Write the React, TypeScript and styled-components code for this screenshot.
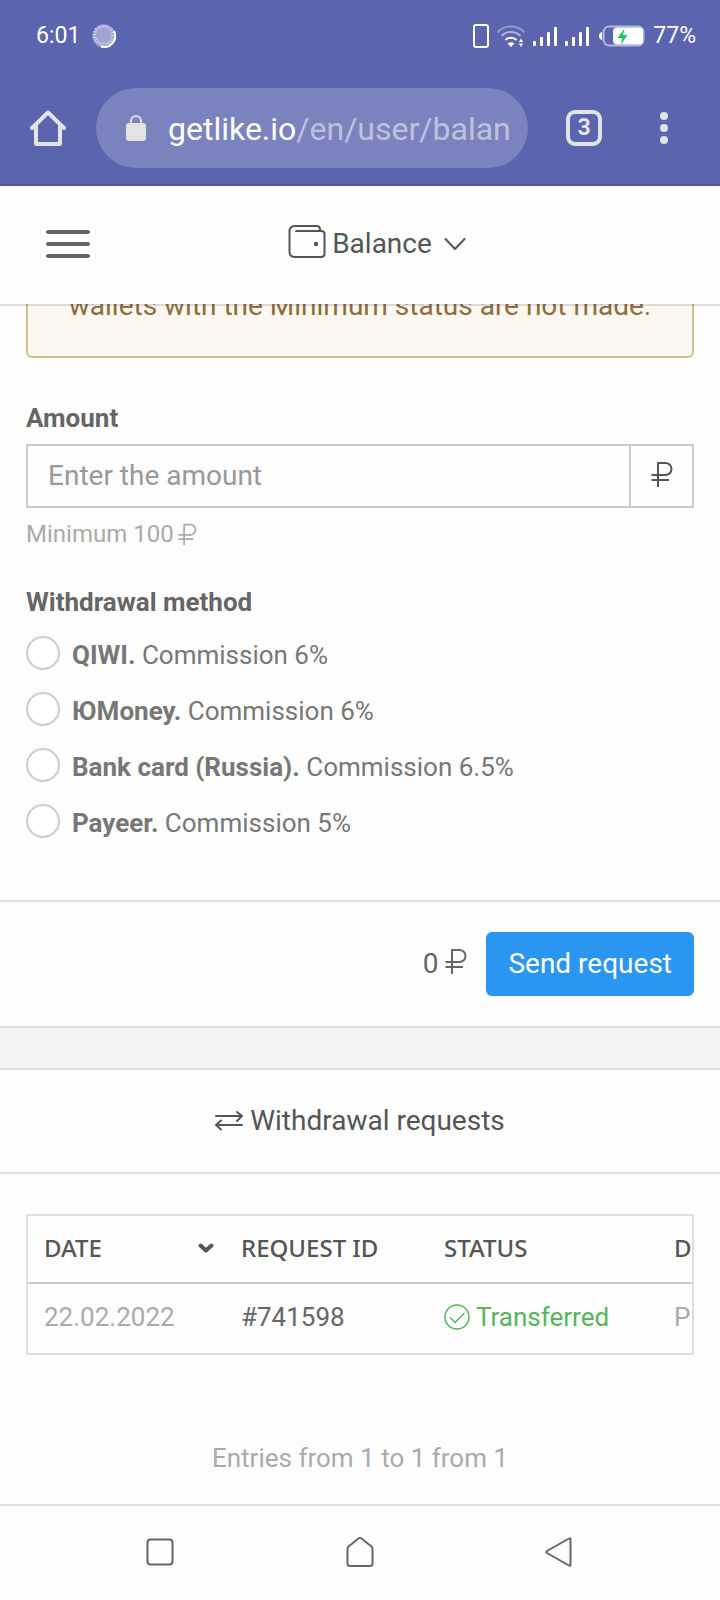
import React from "react";
import styled, { createGlobalStyle } from "styled-components";

const GlobalStyle = createGlobalStyle`
  *, *::before, *::after { box-sizing: border-box; }
  body {
    margin: 0;
    background: #fefefe;
    color: #555;
    font-family: Roboto, "Liberation Sans", sans-serif;
    font-size: 26px;
    line-height: 32px;
  }
  svg { display: block; flex: none; }
`;

const Page = styled.div`
  display: flex;
  flex-direction: column;
  min-height: 100vh;
`;

const IconButton = styled.button`
  display: flex;
  align-items: center;
  justify-content: center;
  padding: 0;
  border: 0;
  background: none;
  color: inherit;
  font: inherit;
  cursor: pointer;
`;

/* Browser chrome */
const Chrome = styled.header`
  background: #5b64ae;
  border-bottom: 2px solid #5057a0;
  color: #fff;
`;

const StatusBar = styled.div`
  display: flex;
  align-items: center;
  justify-content: space-between;
  height: 72px;
  padding: 0 24px 0 36px;
  font-size: 23px;
  line-height: 34px;
`;

const StatusGroup = styled.div`
  display: flex;
  align-items: center;
  gap: ${(p: { $gap: number }) => p.$gap}px;
`;

const Toolbar = styled.div`
  display: flex;
  align-items: center;
  padding: 16px 52px 16px 30px;
  color: #e3e3e3;
`;

const AddressBar = styled.div`
  display: flex;
  align-items: center;
  flex: 1;
  min-width: 0;
  gap: 22px;
  height: 80px;
  margin: 0 38px 0 30px;
  padding: 0 18px 0 30px;
  border-radius: 40px;
  background: #7b83be;
`;

const Address = styled.span`
  overflow: hidden;
  padding-top: 2px;
  color: #bdc1de;
  font-size: 32px;
  line-height: 40px;
  white-space: nowrap;
`;

const Domain = styled.span`
  color: #fff;
`;

const TabCount = styled(IconButton)`
  width: 36px;
  height: 36px;
  margin-right: 58px;
  border: 4px solid #e3e3e3;
  border-radius: 9px;
  font-size: 23px;
  font-weight: 700;
  line-height: 28px;
`;

/* Site header */
const SiteHeader = styled.div`
  position: relative;
  z-index: 1;
  display: flex;
  align-items: center;
  height: 120px;
  padding: 0 56px 2px 46px;
  border-bottom: 2px solid rgba(0, 0, 0, 0.12);
  background: #fefefe;
  background-clip: padding-box;
`;

const SectionMenu = styled(IconButton)`
  flex: 1;
  gap: 6px;
  font-size: 28px;
`;

const SectionName = styled.span`
  margin-right: 6px;
`;

/* Withdrawal form */
const FormBody = styled.div`
  padding: 0 26px 58px;
`;

const Notice = styled.p`
  margin: -44px 0 44px;
  padding: 20px 24px 28px;
  border: 2px solid #d4bd94;
  border-radius: 6px;
  background: #fcf7f1;
  color: #8c6d3b;
  font-size: 28px;
  line-height: 44px;
  text-align: center;
`;

const FieldLabel = styled.label`
  display: block;
  margin-bottom: 10px;
  color: #666;
  font-weight: 700;
`;

const AmountGroup = styled.div`
  display: flex;
  height: 64px;
  border: 2px solid #ccc;
`;

const AmountInput = styled.input`
  flex: 1;
  min-width: 0;
  padding: 0 20px;
  border: 0;
  outline: 0;
  background: transparent;
  color: #555;
  font: inherit;
  font-size: 28px;
  &::placeholder { color: #999; opacity: 1; }
`;

const Addon = styled.span`
  display: flex;
  align-items: center;
  justify-content: center;
  width: 63px;
  padding-bottom: 4px;
  border-left: 2px solid #ccc;
`;

const Hint = styled.div`
  display: flex;
  align-items: center;
  gap: 4px;
  margin: 10px 0 36px;
  color: #aaa;
  font-size: 24px;
`;

const Methods = styled.fieldset`
  display: flex;
  flex-direction: column;
  gap: 18px;
  margin: 0;
  padding: 0;
  border: 0;
`;

const Legend = styled.legend`
  margin-bottom: 18px;
  padding: 0;
  color: #666;
  font-weight: 700;
`;

const Method = styled.label`
  display: flex;
  gap: 12px;
  color: #777;
  line-height: 38px;
`;

const Radio = styled.input`
  appearance: none;
  flex: none;
  width: 34px;
  height: 34px;
  margin: 0;
  border: 2px solid #ccc;
  border-radius: 50%;
  background: #fff;
  &:checked { border: 10px solid #2b96f1; }
`;

const FormFooter = styled.div`
  display: flex;
  align-items: center;
  justify-content: flex-end;
  gap: 19px;
  padding: 30px 26px;
  border-top: 2px solid #ddd;
  border-bottom: 2px solid #ddd;
  box-shadow: 0 2px 4px rgba(0, 0, 0, 0.04);
  color: #666;
`;

const Total = styled.span`
  display: flex;
  align-items: flex-start;
  gap: 7px;
  font-size: 28px;
`;

const SubmitButton = styled.button`
  height: 64px;
  padding: 0 22px;
  border: 0;
  border-radius: 6px;
  background: #2b96f1;
  color: #fff;
  font: inherit;
  font-size: 28px;
  cursor: pointer;
`;

const Divider = styled.div`
  height: 40px;
  background: #f5f4f3;
`;

/* Requests */
const RequestsTitle = styled.h2`
  display: flex;
  align-items: center;
  justify-content: center;
  gap: 7px;
  height: 106px;
  margin: 0;
  border-top: 2px solid #ddd;
  border-bottom: 2px solid #ddd;
  font-size: 28px;
  font-weight: 400;
`;

const RequestsBody = styled.div`
  flex: 1;
  padding: 40px 26px 30px;
`;

const TableFrame = styled.div`
  overflow: hidden;
  border: 2px solid #ddd;
`;

const Table = styled.table`
  width: 830px;
  table-layout: fixed;
  border-collapse: separate;
  border-spacing: 0;
  text-align: left;
`;

const HeadCell = styled.th`
  width: ${(p: { $width?: number }) => (p.$width ? `${p.$width}px` : "auto")};
  height: 68px;
  padding: 0 11px 2px 16px;
  border-bottom: 2px solid #ccc;
  font-family: "Noto Sans", "Open Sans", sans-serif;
  font-size: 24px;
  font-weight: 500;
`;

const SortLabel = styled.span`
  display: flex;
  align-items: center;
  justify-content: space-between;
`;

const Cell = styled.td`
  height: 69px;
  padding: 0 16px 4px;
  color: ${(p: { $muted?: boolean }) => (p.$muted ? "#aaa" : "#666")};
`;

const Status = styled.span`
  display: flex;
  align-items: center;
  gap: 6px;
  color: #55b559;
`;

const Entries = styled.p`
  margin: 87px 0 0;
  color: #aaa;
  text-align: center;
`;

const SystemNav = styled.nav`
  display: flex;
  align-items: center;
  height: 96px;
  padding: 0 60px 2px;
  border-top: 2px solid #e0e0e0;
  color: #666;
`;

const NavButton = styled(IconButton)`
  flex: 1;
  height: 92px;
`;

const stroke = { fill: "none", stroke: "currentColor", strokeLinecap: "round", strokeLinejoin: "round" } as const;

const Ruble = ({ width = 22, height = 26 }: { width?: number; height?: number }) => (
  <svg width={width} height={height} viewBox="0 0 22 26" role="img" aria-label="rubles" {...stroke} strokeLinecap="butt" strokeWidth="2">
    <path d="M7 26V2H14.500a6 6 0 0 1 0 12H0.500M0.500 19H18" />
  </svg>
);

const Signal = () => (
  <svg width="24" height="20" viewBox="0 0 24 20" fill="#fff" aria-hidden="true">
    <rect x="0" y="15" width="3" height="5" rx="1" />
    <rect x="7" y="11" width="3" height="9" rx="1" />
    <rect x="14" y="6" width="3" height="14" rx="1" />
    <rect x="21" y="1" width="3" height="19" rx="1" />
  </svg>
);

const methods = [
  { id: "qiwi", name: "QIWI.", fee: "6%" },
  { id: "yoomoney", name: "ЮMoney.", fee: "6%" },
  { id: "card", name: "Bank card (Russia).", fee: "6.5%" },
  { id: "payeer", name: "Payeer.", fee: "5%" },
];

export default function App() {
  return (
    <Page>
      <GlobalStyle />
      <Chrome>
        <StatusBar>
          <StatusGroup $gap={12}>
            <span>6:01</span>
            <svg width="24" height="24" viewBox="0 0 24 24" fill="none" aria-hidden="true">
              <circle cx="12" cy="12" r="11.500" fill="#9fa5d2" />
              <circle cx="11.500" cy="11" r="9" stroke="#cfd2ea" strokeWidth="3" strokeDasharray="1.200 1.600" />
              <path d="M22 7A11 11 0 0 1 9 22.500" stroke="#fff" strokeWidth="2" />
            </svg>
          </StatusGroup>
          <StatusGroup $gap={8}>
            <svg width="16" height="24" viewBox="0 0 16 24" fill="none" stroke="#fff" strokeWidth="2" aria-hidden="true">
              <rect x="1" y="1" width="14" height="22" rx="2" />
            </svg>
            <svg width="28" height="24" viewBox="0 0 28 24" fill="none" stroke="#fff" strokeWidth="2" aria-hidden="true">
              <path d="M0.500 8.500C7.500 0.500 20.500 0.500 27.500 8.500" opacity=".35" />
              <path d="M4.500 12C9.500 6.500 18.500 6.500 23.500 12" opacity=".5" />
              <path d="M8.500 16C11.500 13 16.500 13 19.500 16" />
              <path d="M10.500 19.500Q14 16.800 17.500 19.500L14 23Z" fill="#fff" stroke="none" />
              <path d="M24 14.500l2.200 3.500h-4.400zM24 23l2.200-3.500h-4.400z" fill="#fff" stroke="none" />
            </svg>
            <Signal />
            <Signal />
            <svg width="48" height="22" viewBox="0 0 48 22" fill="none" aria-hidden="true">
              <path d="M4.500 7.500v7Q2.500 14 2.500 11T4.500 7.500" fill="#fff" stroke="#fff" />
              <rect x="6.500" y="1.500" width="40" height="19" rx="5.500" stroke="#b5b9da" strokeWidth="2" />
              <rect x="16" y="2.500" width="30" height="17" rx="4" fill="#fff" />
              <path d="M27.500 3.500L20.500 13H25L24 19.500 30.500 10H26Z" fill="#18c964" />
            </svg>
            <span>77%</span>
          </StatusGroup>
        </StatusBar>
        <Toolbar>
          <IconButton aria-label="Home page">
            <svg width="36" height="36" viewBox="0 0 36 36" {...stroke} strokeWidth="4">
              <path d="M2 18L18 2.500 34 18M6 16V34H30V16" />
            </svg>
          </IconButton>
          <AddressBar>
            <svg width="20" height="26" viewBox="0 0 20 26" fill="currentColor" aria-hidden="true">
              <rect y="8" width="20" height="18" rx="3" />
              <path d="M5 9V6a5 5 0 0 1 10 0v3" fill="none" stroke="currentColor" strokeWidth="2" />
            </svg>
            <Address>
              <Domain>getlike.io</Domain>/en/user/balan
            </Address>
          </AddressBar>
          <TabCount aria-label="Open tabs">3</TabCount>
          <IconButton aria-label="More options">
            <svg width="8" height="32" viewBox="0 0 8 32" fill="currentColor">
              <circle cx="4" cy="4" r="4" />
              <circle cx="4" cy="16" r="4" />
              <circle cx="4" cy="28" r="4" />
            </svg>
          </IconButton>
        </Toolbar>
      </Chrome>

      <SiteHeader>
        <IconButton aria-label="Menu">
          <svg width="44" height="28" viewBox="0 0 44 28" fill="#666">
            <rect width="44" height="4" rx="2" />
            <rect y="12" width="44" height="4" rx="2" />
            <rect y="24" width="44" height="4" rx="2" />
          </svg>
        </IconButton>
        <SectionMenu>
          <svg width="38" height="38" viewBox="0 0 38 38" {...stroke} strokeWidth="2" aria-hidden="true">
            <path d="M8 6H33.500Q36.500 6 36.500 9V28.500Q36.500 32 33 32H7Q1.500 32 1.500 26.500V6.500Q1.500 1 7 1H28.500Q32 1 32 4.500V6" />
            <circle cx="28" cy="19" r="2.200" fill="currentColor" stroke="none" />
          </svg>
          <SectionName>Balance</SectionName>
          <svg width="22" height="12" viewBox="0 0 22 12" {...stroke} strokeWidth="2" aria-hidden="true">
            <path d="M1.500 1L11 11 20.500 1" />
          </svg>
        </SectionMenu>
      </SiteHeader>

      <form onSubmit={(e) => e.preventDefault()}>
        <FormBody>
          <Notice>wallets with the Minimum status are not made.</Notice>
          <FieldLabel htmlFor="amount">Amount</FieldLabel>
          <AmountGroup>
            <AmountInput id="amount" placeholder="Enter the amount" inputMode="numeric" />
            <Addon>
              <Ruble />
            </Addon>
          </AmountGroup>
          <Hint>
            Minimum 100 <Ruble width={19} height={22} />
          </Hint>
          <Methods>
            <Legend>Withdrawal method</Legend>
            {methods.map((m) => (
              <Method key={m.id}>
                <Radio type="radio" name="method" value={m.id} />
                <span>
                  <b>{m.name}</b> Commission {m.fee}
                </span>
              </Method>
            ))}
          </Methods>
        </FormBody>
        <FormFooter>
          <Total>
            0 <Ruble />
          </Total>
          <SubmitButton type="submit">Send request</SubmitButton>
        </FormFooter>
      </form>

      <Divider />

      <RequestsTitle>
        <svg width="28" height="20" viewBox="0 0 28 20" {...stroke} strokeWidth="2" aria-hidden="true">
          <path d="M1 5H27M22 1L27 5 22 10M27 14H1M6 9.500L1 14 6 18.500" />
        </svg>
        Withdrawal requests
      </RequestsTitle>
      <RequestsBody>
        <TableFrame>
          <Table>
            <thead>
              <tr>
                <HeadCell $width={197}>
                  <SortLabel>
                    DATE
                    <svg width="16" height="10" viewBox="0 0 16 10" {...stroke} strokeWidth="4" aria-hidden="true">
                      <path d="M2.500 2.500L8 7.500 13.500 2.500" />
                    </svg>
                  </SortLabel>
                </HeadCell>
                <HeadCell $width={203}>REQUEST ID</HeadCell>
                <HeadCell $width={230}>STATUS</HeadCell>
                <HeadCell>D</HeadCell>
              </tr>
            </thead>
            <tbody>
              <tr>
                <Cell $muted>22.02.2022</Cell>
                <Cell>#741598</Cell>
                <Cell>
                  <Status>
                    <svg width="26" height="26" viewBox="0 0 26 26" {...stroke} strokeWidth="1.500" aria-hidden="true">
                      <circle cx="13" cy="13" r="12" />
                      <path d="M6.500 14L11 18.500 20 9.500" />
                    </svg>
                    Transferred
                  </Status>
                </Cell>
                <Cell $muted>P</Cell>
              </tr>
            </tbody>
          </Table>
        </TableFrame>
        <Entries>Entries from 1 to 1 from 1</Entries>
      </RequestsBody>

      <SystemNav>
        <NavButton aria-label="Recent apps">
          <svg width="28" height="28" viewBox="0 0 28 28" {...stroke} strokeWidth="2">
            <rect x="1.500" y="1.500" width="25" height="25" rx="3" />
          </svg>
        </NavButton>
        <NavButton aria-label="Home">
          <svg width="28" height="30" viewBox="0 0 28 30" {...stroke} strokeWidth="2">
            <path d="M12.500 1.500Q14 0.500 15.500 1.500L25.500 9.500Q26.500 10.500 26.500 12V26.500Q26.500 29 24 29H4Q1.500 29 1.500 26.500V12Q1.500 10.500 2.500 9.500Z" />
          </svg>
        </NavButton>
        <NavButton aria-label="Back">
          <svg width="30" height="30" viewBox="0 0 30 30" {...stroke} strokeWidth="2">
            <path d="M24 1.500Q25.500 0.500 25.500 2.500V27.500Q25.500 29.500 24 28.500L2 16Q0.500 15 2 14Z" />
          </svg>
        </NavButton>
      </SystemNav>
    </Page>
  );
}
